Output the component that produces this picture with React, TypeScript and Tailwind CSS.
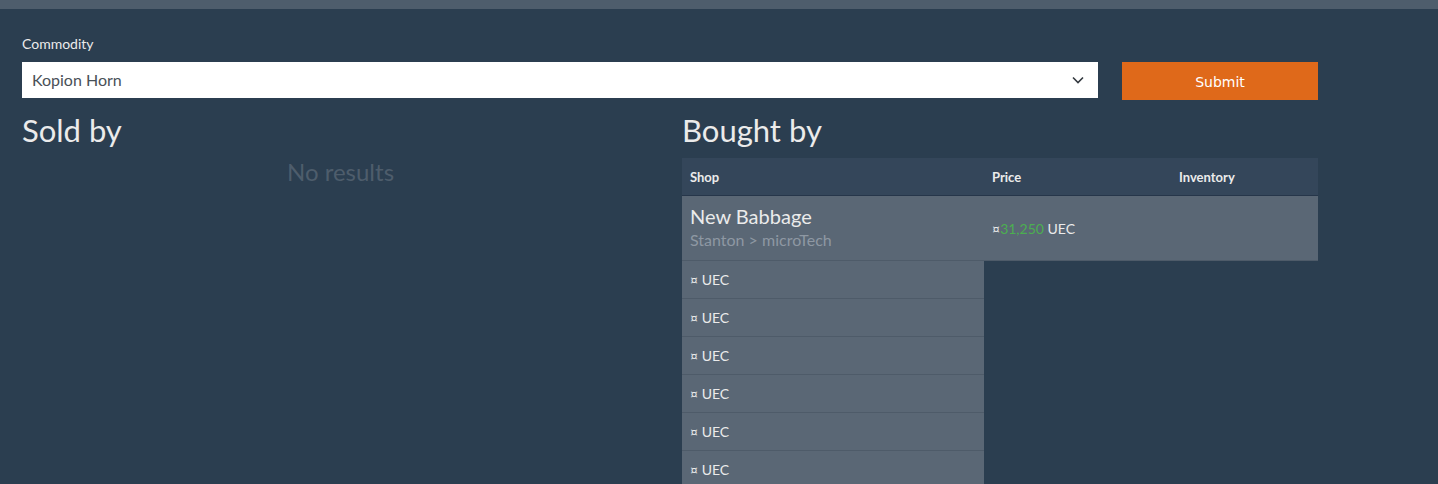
import React from 'react';

const font = "font-['Lato','Liberation_Sans',sans-serif]";

const ChevronDown = () => (
  <svg width="12" height="8" viewBox="0 0 12 8" fill="none">
    <path d="M1 1.5l5 5 5-5" stroke="#343a40" strokeWidth="1.6" />
  </svg>
);

const SoldBy = () => (
  <div>
    <h2 className="text-[31px] leading-[1.2] text-[#ebebeb] mb-[9px]">Sold by</h2>
    <div className="text-center text-[24px] leading-[1.2] text-[#4e5d6c]">No results</div>
  </div>
);

const BoughtBy = () => {
  const emptyRows = [1, 2, 3, 4, 5, 6];
  return (
    <div>
      <h2 className="text-[31px] leading-[1.2] text-[#ebebeb] mb-[9px]">Bought by</h2>

      {/* header */}
      <div className="grid grid-cols-[302px_187px_1fr] h-[38px] bg-[#34465a] border-b border-[#26364a] text-[13px] font-bold text-[#ebebeb] items-center">
        <div className="px-2 pt-[3px]">Shop</div>
        <div className="px-2 pt-[3px]">Price</div>
        <div className="px-2 pt-[3px]">Inventory</div>
      </div>

      {/* first shop */}
      <div className="grid grid-cols-[302px_187px_1fr] h-[65px] bg-[#5a6775] border-b border-[#4e5b69] items-center">
        <div className="px-2 self-start pt-[7px]">
          <div className="text-[20px] leading-[27px] text-[#ebebeb]">New Babbage</div>
          <div className="text-[16px] leading-[1.2] text-[#8e98a3]">Stanton &gt; microTech</div>
        </div>
        <div className="px-2 pt-[2px] text-[14px] text-[#ebebeb]">
          ¤<span className="text-[#4caf50]">31,250</span> UEC
        </div>
        <div></div>
      </div>

      {/* broken rows */}
      {emptyRows.map((r) => (
        <div key={r} className="w-[302px] h-[38px] bg-[#5a6775] border-b border-[#4e5b69] flex items-center px-2 text-[14px] text-[#ebebeb]">
          ¤ UEC
        </div>
      ))}
    </div>
  );
};

export default function App() {
  return (
    <div className={`min-h-screen bg-[#2b3e50] ${font}`}>
      <div className="h-[9px] bg-[#4e5d6c]" />
      <div className="w-[1296px] ml-[22px] pt-[27px]">
        <label className="block text-[14px] leading-[1.2] text-[#ebebeb] mb-[9px]">Commodity</label>
        <div className="flex gap-6 items-start">
          <div className="flex-1 h-[36px] bg-white flex items-center justify-between pl-[10px] pr-[14px]">
            <span className="text-[16px] text-[#495057]">Kopion Horn</span>
            <ChevronDown />
          </div>
          <button className="w-[196px] h-[38px] pt-[3px] bg-[#df691a] text-white text-[14px] font-['DejaVu_Sans',sans-serif]">
            Submit
          </button>
        </div>
        <div className="grid grid-cols-[637px_636px] gap-[23px] mt-[12px]">
          <SoldBy />
          <BoughtBy />
        </div>
      </div>
    </div>
  );
}
